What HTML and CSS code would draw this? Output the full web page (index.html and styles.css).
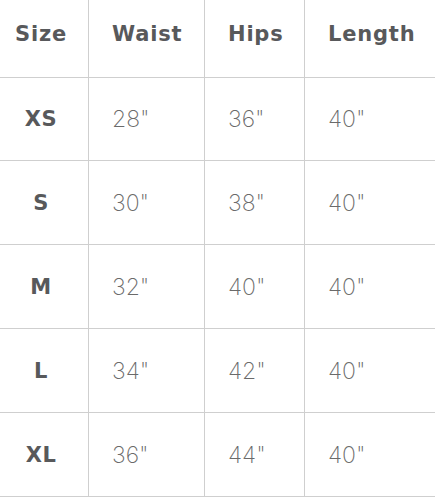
FILE: index.html
```html
<!DOCTYPE html>
<html>
<head>
<meta charset="utf-8">
<link rel="stylesheet" href="styles.css">
</head>
<body>
<table class="size-table">
  <colgroup>
    <col class="c-size"><col class="c-waist"><col class="c-hips"><col class="c-length">
  </colgroup>
  <thead>
    <tr class="head-row">
      <th class="size">Size</th><th>Waist</th><th>Hips</th><th>Length</th>
    </tr>
  </thead>
  <tbody>
    <tr class="row first"><td class="size">XS</td><td>28"</td><td>36"</td><td>40"</td></tr>
    <tr class="row"><td class="size">S</td><td>30"</td><td>38"</td><td>40"</td></tr>
    <tr class="row"><td class="size">M</td><td>32"</td><td>40"</td><td>40"</td></tr>
    <tr class="row"><td class="size">L</td><td>34"</td><td>42"</td><td>40"</td></tr>
    <tr class="row"><td class="size">XL</td><td>36"</td><td>44"</td><td>40"</td></tr>
  </tbody>
</table>
</body>
</html>
```
FILE: styles.css
```css
html, body {
  margin: 0;
  padding: 0;
  background: #fff;
}
.size-table {
  border-collapse: separate;
  border-spacing: 0;
  table-layout: fixed;
  width: 435px;
  font-family: "DejaVu Sans", "Open Sans", sans-serif;
}
.c-size { width: 89px; }
.c-waist { width: 116px; }
.c-hips { width: 100px; }
.c-length { width: 130px; }
th, td {
  box-sizing: border-box;
  border-bottom: 1px solid #cfcfcf;
  border-right: 1px solid #cfcfcf;
  padding: 0 0 0 23px;
  text-align: left;
  white-space: nowrap;
}
th:last-child, td:last-child { border-right: none; }
th {
  height: 78px;
  padding-bottom: 9px;
  font-size: 21px;
  font-weight: 700;
  color: #58595b;
  letter-spacing: 0.8px;
}
td {
  height: 84px;
  font-family: Inter, "Open Sans", sans-serif;
  font-size: 23px;
  font-weight: 200;
  color: #6a6a6a;
  letter-spacing: 0;
}
.first td { height: 83px; }
.size {
  text-align: center;
  padding: 0 6px 0 0;
}
td.size {
  font-family: "DejaVu Sans", sans-serif;
  font-weight: 700;
  color: #58595b;
  font-size: 21px;
  letter-spacing: 0.5px;
}
th.size { padding-bottom: 9px; }
```
